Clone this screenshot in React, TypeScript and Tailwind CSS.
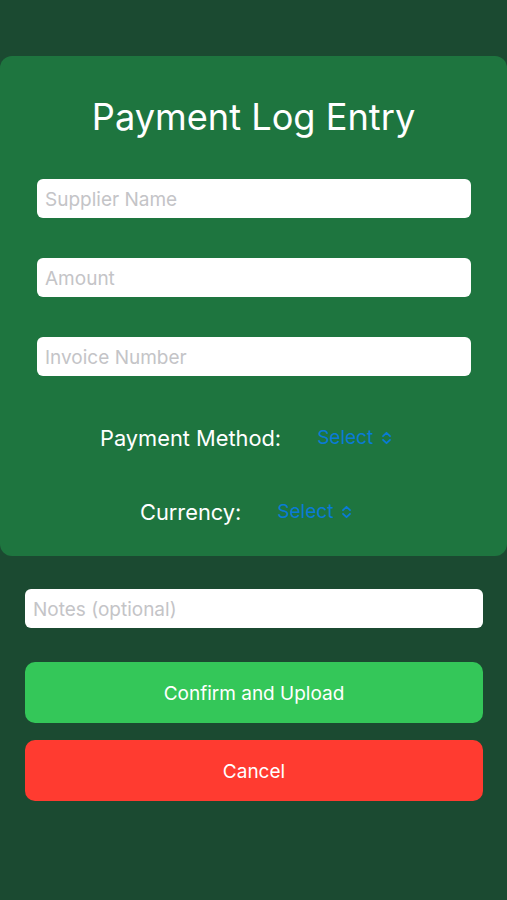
import React from "react";

function Chevrons() {
  return (
    <svg width="11" height="14" viewBox="0 0 11 14" fill="none" stroke="#0a7bd6" strokeWidth="1.8" strokeLinecap="round" strokeLinejoin="round">
      <path d="M2 5.2 L5.5 1.8 L9 5.2" />
      <path d="M2 8.8 L5.5 12.2 L9 8.8" />
    </svg>
  );
}

function Field({ placeholder }: { placeholder: string }) {
  return (
    <div className="h-[39px] w-full rounded-[6px] bg-white flex items-center pl-[8px] pt-[3px] text-[19px] text-[#c4c4c7]">
      {placeholder}
    </div>
  );
}

export default function App() {
  return (
    <div
      className="w-[507px] h-[900px] bg-[#1b4a31] flex flex-col"
      style={{ fontFamily: "Inter, 'Liberation Sans', sans-serif" }}
    >
      <div className="mt-[56px] h-[500px] rounded-[12px] bg-[#1e753f] flex flex-col items-stretch">
        <div className="mt-[33px] h-[56px] flex items-center justify-center text-white text-[36.2px] leading-none">
          Payment Log Entry
        </div>
        <div className="mt-[34px] pl-[37px] pr-[36px] flex flex-col gap-[40px]">
          <Field placeholder="Supplier Name" />
          <Field placeholder="Amount" />
          <Field placeholder="Invoice Number" />
        </div>
        <div className="mt-[47px] h-[30px] flex items-center">
          <span className="ml-[100px] text-white text-[21.8px]">Payment Method:</span>
          <span className="ml-[36px] text-[#0a7bd6] text-[19px]">Select</span>
          <span className="ml-[8px] flex items-center"><Chevrons /></span>
        </div>
        <div className="mt-[44px] h-[30px] flex items-center">
          <span className="ml-[140px] text-white text-[21.8px]">Currency:</span>
          <span className="ml-[36px] text-[#0a7bd6] text-[19px]">Select</span>
          <span className="ml-[8px] flex items-center"><Chevrons /></span>
        </div>
      </div>
      <div className="mt-[33px] pl-[25px] pr-[24px]">
        <Field placeholder="Notes (optional)" />
      </div>
      <div className="mt-[34px] pl-[25px] pr-[24px] flex flex-col gap-[17px]">
        <div className="h-[61px] rounded-[10px] bg-[#34c759] flex items-center justify-center pt-[3px] text-white text-[19px]">
          Confirm and Upload
        </div>
        <div className="h-[61px] rounded-[10px] bg-[#ff3b30] flex items-center justify-center pt-[3px] text-white text-[19px]">
          Cancel
        </div>
      </div>
    </div>
  );
}
